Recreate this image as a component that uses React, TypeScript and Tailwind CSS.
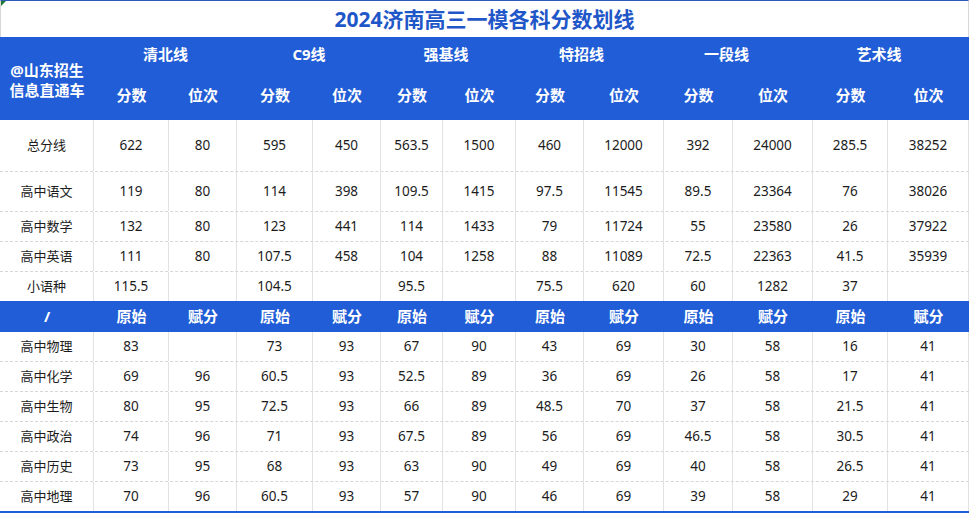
const cols = [
  "w-[94px]",
  "w-[75px]",
  "w-[68px]",
  "w-[76px]",
  "w-[68px]",
  "w-[62px]",
  "w-[73px]",
  "w-[68px]",
  "w-[80px]",
  "w-[69px]",
  "w-[80px]",
  "w-[75px]",
  "w-[81px]",
];

const groups = ["清北线", "C9线", "强基线", "特招线", "一段线", "艺术线"];
const groupWidths = ["w-[143px]", "w-[144px]", "w-[130px]", "w-[141px]", "w-[149px]", "w-[156px]"];

const topRows = [
  { h: "h-[52px]", cells: ["总分线", "622", "80", "595", "450", "563.5", "1500", "460", "12000", "392", "24000", "285.5", "38252"] },
  { h: "h-[40px]", cells: ["高中语文", "119", "80", "114", "398", "109.5", "1415", "97.5", "11545", "89.5", "23364", "76", "38026"] },
  { h: "h-[30px]", cells: ["高中数学", "132", "80", "123", "441", "114", "1433", "79", "11724", "55", "23580", "26", "37922"] },
  { h: "h-[30px]", cells: ["高中英语", "111", "80", "107.5", "458", "104", "1258", "88", "11089", "72.5", "22363", "41.5", "35939"] },
  { h: "h-[29px]", cells: ["小语种", "115.5", "", "104.5", "", "95.5", "", "75.5", "620", "60", "1282", "37", ""], last: true },
];

const subjectRows = [
  { h: "h-[30px]", cells: ["高中物理", "83", "", "73", "93", "67", "90", "43", "69", "30", "58", "16", "41"] },
  { h: "h-[30px]", cells: ["高中化学", "69", "96", "60.5", "93", "52.5", "89", "36", "69", "26", "58", "17", "41"] },
  { h: "h-[30px]", cells: ["高中生物", "80", "95", "72.5", "93", "66", "89", "48.5", "70", "37", "58", "21.5", "41"] },
  { h: "h-[30px]", cells: ["高中政治", "74", "96", "71", "93", "67.5", "89", "56", "69", "46.5", "58", "30.5", "41"] },
  { h: "h-[30px]", cells: ["高中历史", "73", "95", "68", "93", "63", "90", "49", "69", "40", "58", "26.5", "41"] },
  { h: "h-[29px]", cells: ["高中地理", "70", "96", "60.5", "93", "57", "90", "46", "69", "39", "58", "29", "41"], last: true },
];

type Row = { h: string; cells: string[]; last?: boolean };

function DataRow({ row }: { row: Row }) {
  return (
    <div
      className={`flex ${row.h} ${row.last ? "" : "border-b border-dashed border-[#d6d6d6]"}`}
    >
      {row.cells.map((c, i) => (
        <div
          key={i}
          className={`${cols[i]} shrink-0 flex items-center justify-center border-r border-[#e2e2e2] ${
            i === 0 ? "text-[13px]" : ""
          }`}
        >
          {c}
        </div>
      ))}
    </div>
  );
}

export default function App() {
  const sub2 = ["原始", "赋分"];
  return (
    <div
      className="w-[969px] h-[513px] bg-white text-[13.5px] text-[#1c1c1c] overflow-hidden"
      style={{ fontFamily: '"Noto Sans", "Noto Sans CJK SC", sans-serif' }}
    >
      {/* Title */}
      <div className="relative h-[37px] border-t border-[#2b5db8] border-l border-r border-l-[#d8d8d8] border-r-[#d8d8d8] flex items-center justify-center">
        <span className="absolute left-0 top-0 w-0 h-0 border-t-[5px] border-r-[5px] border-t-[#1f7a2e] border-r-transparent" />
        <h1 className="text-[21px] font-bold text-[#1f57c8] leading-none">
          2024济南高三一模各科分数划线
        </h1>
      </div>

      {/* Header */}
      <div className="flex h-[83px] bg-[#215dd6] text-white font-bold text-[15px]">
        <div className={`${cols[0]} shrink-0 flex flex-col items-center justify-center leading-[20px] pt-[2px]`}>
          <span>@山东招生</span>
          <span>信息直通车</span>
        </div>
        <div className="flex flex-col">
          <div className="flex h-[33px]">
            {groups.map((g, gi) => (
              <div key={g} className={`${groupWidths[gi]} flex items-center justify-center pt-[2px]`}>
                {g}
              </div>
            ))}
          </div>
          <div className="flex h-[50px]">
            {cols.slice(1).map((w, i) => (
              <div key={i} className={`${w} shrink-0 flex items-center justify-center pt-[1px]`}>
                {i % 2 === 0 ? "分数" : "位次"}
              </div>
            ))}
          </div>
        </div>
      </div>

      {topRows.map((r, i) => (
        <DataRow key={i} row={r} />
      ))}

      {/* Second header */}
      <div className="flex h-[31px] bg-[#215dd6] text-white font-bold text-[15px]">
        {cols.map((w, i) => (
          <div key={i} className={`${w} shrink-0 flex items-center justify-center`}>
            {i === 0 ? "/" : sub2[(i - 1) % 2]}
          </div>
        ))}
      </div>

      {subjectRows.map((r, i) => (
        <DataRow key={i} row={r} />
      ))}

      <div className="h-[2px] bg-[#215dd6]" />
    </div>
  );
}
